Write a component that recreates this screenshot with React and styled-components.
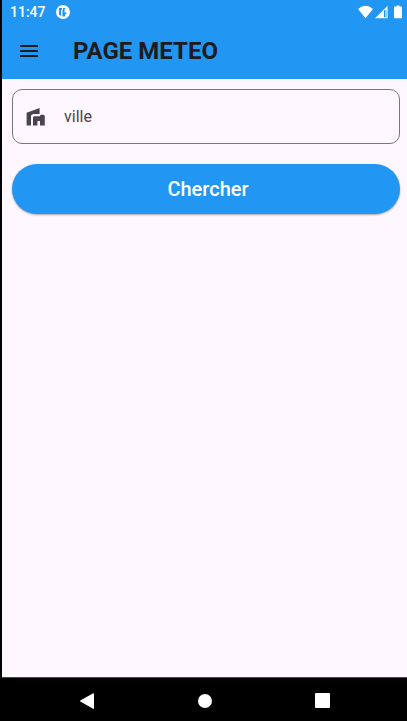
import React from "react";
import styled, { createGlobalStyle } from "styled-components";

const BLUE = "#2196f3";

const GlobalStyle = createGlobalStyle`
  * { box-sizing: border-box; }
  body { margin: 0; background: #000; font-family: Roboto, sans-serif; }
  svg { display: block; flex: none; }
`;

const Screen = styled.div`
  min-height: 100vh;
  display: flex;
  flex-direction: column;
  border-left: 2px solid #000;
  background: #fef7ff;
`;

const StatusBar = styled.div`
  display: flex;
  align-items: center;
  justify-content: space-between;
  height: 24px;
  padding: 0 5px 0 8px;
  background: ${BLUE};
  color: #fff;
  font-size: 14px;
  font-weight: 500;
`;

const StatusGroup = styled.div`
  display: flex;
  align-items: center;
  gap: ${({ $gap }) => $gap}px;
`;

const AppBar = styled.header`
  display: flex;
  align-items: center;
  gap: 20px;
  height: 55px;
  padding: 0 3px 2px;
  background: ${BLUE};
`;

const IconButton = styled.button`
  display: flex;
  align-items: center;
  justify-content: center;
  width: 48px;
  height: 48px;
  padding: 0;
  border: 0;
  border-radius: 50%;
  background: transparent;
  color: ${({ $color }) => $color};
  cursor: pointer;
`;

const Title = styled.h1`
  margin: 0;
  color: #1d1b20;
  font-size: 24px;
  line-height: 32px;
  font-weight: 700;
`;

const Form = styled.form`
  flex: 1;
  display: flex;
  flex-direction: column;
  gap: 20px;
  padding: 10px 7px 10px 10px;
`;

const Field = styled.label`
  display: flex;
  align-items: center;
  gap: 16px;
  height: 55px;
  padding: 0 11px;
  border: 1px solid #79747e;
  border-radius: 10px;
  color: #49454f;
`;

const FieldInput = styled.input`
  flex: 1;
  min-width: 0;
  padding: 0;
  border: 0;
  outline: 0;
  background: transparent;
  color: #1d1b20;
  font: 400 16px/24px Roboto, sans-serif;
  &::placeholder { color: #49454f; opacity: 1; }
`;

const SearchButton = styled.button`
  height: 50px;
  padding: 0 20px 0 24px;
  border: 0;
  border-radius: 25px;
  background: ${BLUE};
  color: #fff;
  font: 500 20px/24px Roboto, sans-serif;
  box-shadow: 0 1px 2px rgba(0, 0, 0, 0.35);
  cursor: pointer;
`;

const NavBar = styled.nav`
  display: flex;
  align-items: center;
  justify-content: center;
  gap: 70px;
  height: 44px;
  padding: 2px 0 0;
  border-top: 1px solid #49454f;
  background: #000;
`;

const NotificationIcon = () => (
  <svg width="14" height="14" viewBox="0 0 14 14">
    <circle cx="7" cy="7" r="7" fill="#fff" />
    <path d="M3 3H6V5H5V11L3 9.6z M7 3H9V4H8.6V7.6H10.4V9.2H9V11.6H6.4V5H7z" fill={BLUE} />
  </svg>
);

const WifiIcon = () => (
  <svg width="15" height="14" viewBox="0 0 15 14">
    <path d="M0 4Q7.5-2.4 15 4L7.5 13.2z" fill="#fff" />
  </svg>
);

const SignalIcon = () => (
  <svg width="13" height="14" viewBox="0 0 13 14">
    <path fillRule="evenodd" d="M0 13.2L12.6.8v12.4z M9 5.2v7h2.6v-7z" fill="#fff" />
    <path d="M10 5.2h1.6v7H10z" fill="#fff" fillOpacity="0.5" />
  </svg>
);

const BatteryIcon = () => (
  <svg width="8" height="14" viewBox="0 0 8 14">
    <path d="M2.5.5h3v1h1.9a.6.6 0 0 1 .6.6v10.5a.7.7 0 0 1-.7.7H.7a.7.7 0 0 1-.7-.7V2.1a.6.6 0 0 1 .6-.6h1.9z" fill="#fff" />
  </svg>
);

const MenuIcon = () => (
  <svg width="24" height="24" viewBox="0 0 24 24" fill="currentColor">
    <path d="M3 18h18v-2H3v2zm0-5h18v-2H3v2zm0-7v2h18V6H3z" />
  </svg>
);

const HousesIcon = () => (
  <svg width="24" height="24" viewBox="0 0 24 24" fill="currentColor">
    <path d="M2.6 7.8L15.6 3V9H9.2L7 10.4V20.5H2.6z" />
    <path d="M9 12L10 11.2H16V10.4L17 9.8H19.8L20.8 11V20.5H16V16H13.4V20.5H9z" />
  </svg>
);

export default function App() {
  return (
    <>
      <GlobalStyle />
      <Screen>
        <StatusBar>
          <StatusGroup $gap={10}>
            <span>11:47</span>
            <NotificationIcon />
          </StatusGroup>
          <StatusGroup $gap={6}>
            <StatusGroup $gap={2}>
              <WifiIcon />
              <SignalIcon />
            </StatusGroup>
            <BatteryIcon />
          </StatusGroup>
        </StatusBar>
        <AppBar>
          <IconButton type="button" aria-label="Menu" $color="#1d1b20">
            <MenuIcon />
          </IconButton>
          <Title>PAGE METEO</Title>
        </AppBar>
        <Form onSubmit={(event) => event.preventDefault()}>
          <Field>
            <HousesIcon />
            <FieldInput type="text" name="ville" placeholder="ville" aria-label="ville" />
          </Field>
          <SearchButton type="submit">Chercher</SearchButton>
        </Form>
        <NavBar>
          <IconButton type="button" aria-label="Retour" $color="#fff">
            <svg width="16" height="16" viewBox="0 0 16 16" fill="currentColor">
              <path d="M14.2.2Q15 0 15 .8v14.4q0 .8-.8.6L1.3 8.6Q.6 8 1.3 7.4z" />
            </svg>
          </IconButton>
          <IconButton type="button" aria-label="Accueil" $color="#fff">
            <svg width="14" height="14" viewBox="0 0 14 14" fill="currentColor">
              <circle cx="7" cy="7" r="7" />
            </svg>
          </IconButton>
          <IconButton type="button" aria-label="Applications" $color="#fff">
            <svg width="15" height="15" viewBox="0 0 15 15" fill="currentColor">
              <rect width="15" height="15" rx="1" />
            </svg>
          </IconButton>
        </NavBar>
      </Screen>
    </>
  );
}
